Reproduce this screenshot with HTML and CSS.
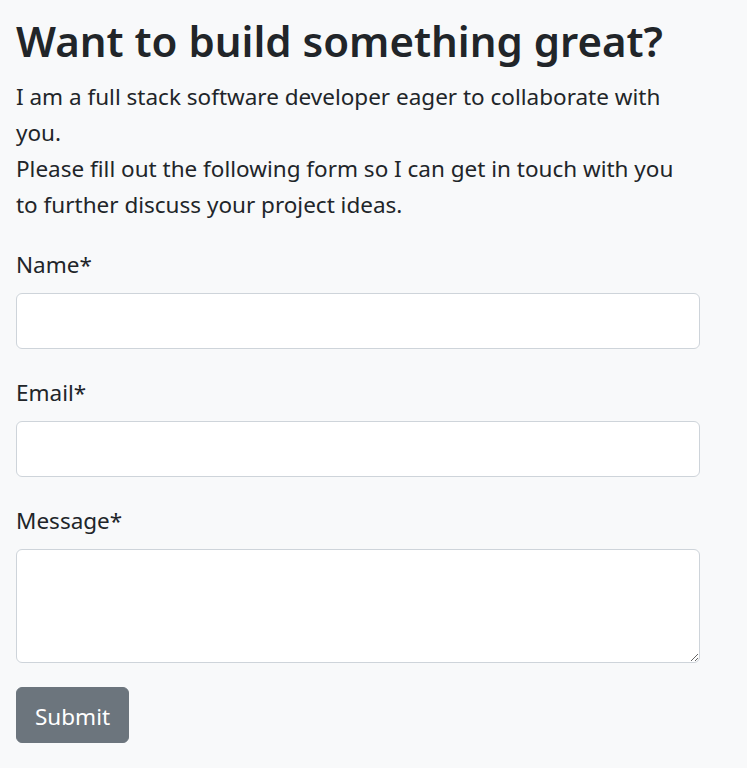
FILE: index.html
```
<!DOCTYPE html>
<html lang="en">
<head>
<meta charset="utf-8">
<title>Contact</title>
<link rel="stylesheet" href="styles.css">
</head>
<body>
<main class="page">
  <h1 class="title">Want to build something great?</h1>
  <p class="lead">I am a full stack software developer eager to collaborate with you.<br>Please fill out the following form so I can get in touch with you to further discuss your project ideas.</p>
  <form class="form">
    <div class="group">
      <label class="label" for="name">Name*</label>
      <input class="control" id="name" type="text">
    </div>
    <div class="group">
      <label class="label" for="email">Email*</label>
      <input class="control" id="email" type="email">
    </div>
    <div class="group">
      <label class="label" for="message">Message*</label>
      <textarea class="control area" id="message"></textarea>
    </div>
    <div class="actions">
      <button class="btn" type="button">Submit</button>
    </div>
  </form>
</main>
</body>
</html>
```
FILE: styles.css
```
html, body {
  margin: 0;
  padding: 0;
  background: #f8f9fa;
}
body {
  font-family: "Noto Sans", "Open Sans", sans-serif;
  color: #212529;
  font-size: 22.5px;
  line-height: 36px;
}
.page {
  padding: 16px 16px 16px;
  max-width: 684px;
}
.title {
  margin: 0 0 11px;
  font-size: 42px;
  font-weight: 600;
  line-height: 50px;
}
.lead {
  margin: 0 0 22px;
  padding-top: 2px;
}
.form {
  display: flex;
  flex-direction: column;
  gap: 24px;
}
.group {
  display: flex;
  flex-direction: column;
  gap: 10px;
}
.label {
  display: block;
  padding-top: 2px;
}
.control {
  box-sizing: border-box;
  display: block;
  width: 100%;
  height: 56px;
  margin: 0;
  padding: 9px 18px;
  font: inherit;
  color: #212529;
  background: #fff;
  border: 1px solid #ced4da;
  border-radius: 6px;
  outline: none;
}
.area {
  height: 114px;
  resize: vertical;
}
.actions {
  display: flex;
}
.btn {
  box-sizing: border-box;
  height: 56px;
  padding: 11px 18px 7px;
  font: inherit;
  color: #fff;
  background: #6c757d;
  border: 1px solid #6c757d;
  border-radius: 6px;
  cursor: pointer;
}
```
